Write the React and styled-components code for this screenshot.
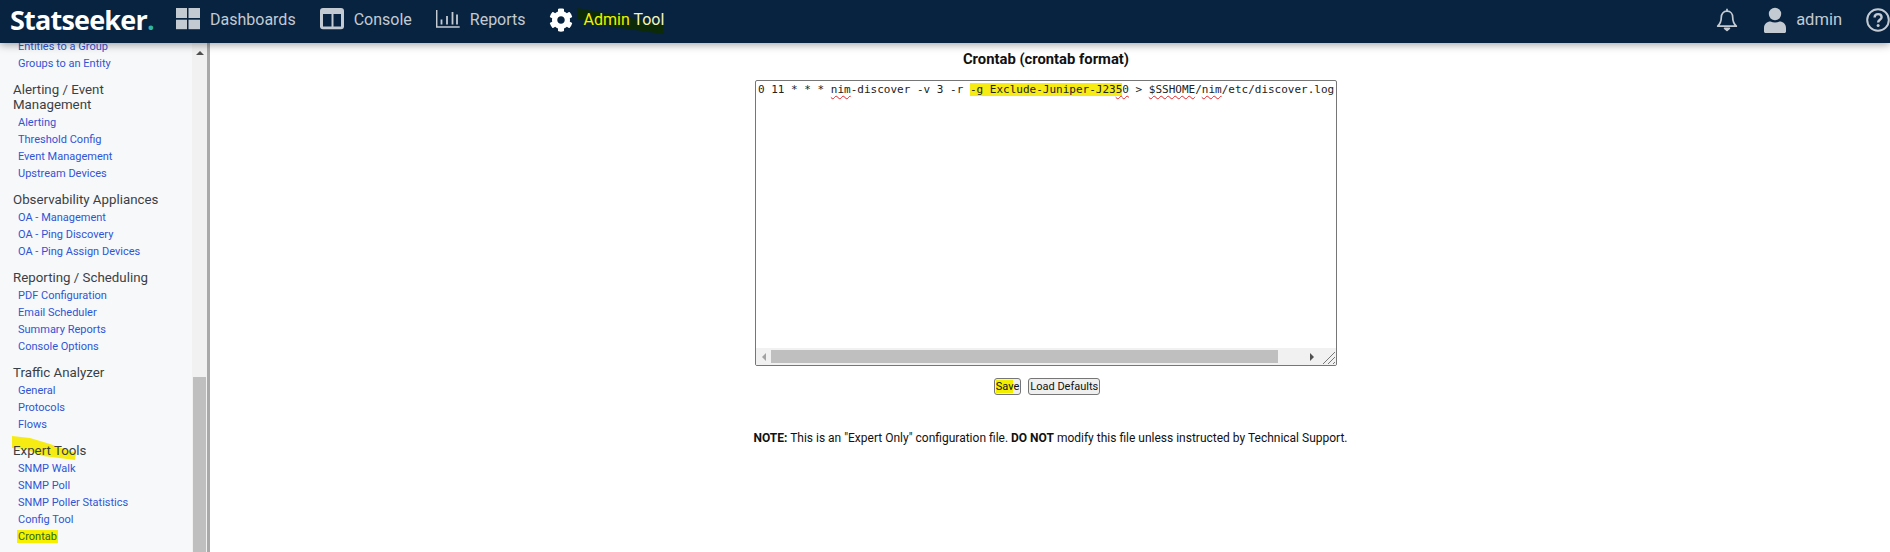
import React from "react";
import styled, { createGlobalStyle } from "styled-components";

const Global = createGlobalStyle`
  html, body { margin: 0; padding: 0; height: 100%; background: #fff; overflow: hidden; }
  #root { height: 552px; }
  * { box-sizing: border-box; }
`;

const Page = styled.div`
  width: 1890px;
  height: 552px;
  display: flex;
  flex-direction: column;
  font-family: Roboto, "Liberation Sans", sans-serif;
  overflow: hidden;
`;

const TopBar = styled.header`
  height: 43px;
  flex: none;
  background: #082340;
  display: flex;
  align-items: center;
  padding: 0 0 4px 10px;
  box-shadow: 0 2px 8px rgba(0, 0, 0, 0.35);
  position: relative;
  z-index: 2;
`;

const Logo = styled.div`
  font-family: "Open Sans", sans-serif;
  font-weight: 700;
  font-size: 27px;
  letter-spacing: -0.8px;
  color: #fff;
  width: 166px;
  flex: none;
  line-height: 39px;
  span { color: #2fb5a5; }
`;

const NavItem = styled.div`
  display: flex;
  align-items: center;
  gap: ${(p) => p.$gap ?? 10}px;
  margin-right: ${(p) => p.$mr ?? 0}px;
  font-size: ${(p) => p.$size ?? 16}px;
  color: #c3cad2;
  flex: none;
`;

const MarkedLabel = styled.span`
  position: relative;
  color: #f2f200;
  font-size: 16px;
  margin-left: 1px;
`;

const LabelText = styled.span`
  position: relative;
`;

const PaleText = styled.span`
  color: #f4f6b8;
`;

const MarkStroke = styled.svg`
  position: absolute;
  left: -7px;
  top: -2px;
  overflow: visible;
`;

const Spacer = styled.div`
  flex: 1;
`;

const Body = styled.div`
  flex: 1;
  display: flex;
  min-height: 0;
`;

const Sidebar = styled.aside`
  width: 210px;
  flex: none;
  display: flex;
  border-right: 3px solid #a9a9a9;
  background: #f7f8fa;
`;

const SideList = styled.nav`
  flex: 1;
  min-width: 0;
  overflow: hidden;
  padding: 0 12px 0 13px;
`;

const SideInner = styled.div`
  margin-top: -5px;
`;

const Group = styled.section`
  margin-bottom: 10px;
`;

const GroupTitle = styled.h4`
  margin: 0 0 2px;
  font-size: 13.3px;
  line-height: 15px;
  font-weight: 400;
  color: #3a3f45;
  position: relative;
`;

const SideLink = styled.a`
  display: block;
  font-size: 11px;
  line-height: 17px;
  padding-left: 5px;
  color: #2f55d4;
  white-space: nowrap;
`;

const LinkMark = styled.span`
  background: #f6f000;
  color: #2b6a10;
  padding: 0 1px;
  margin-left: -1px;
`;

const ExpertMark = styled.svg`
  position: absolute;
  left: -2px;
  top: -8px;
`;

const PageScroll = styled.div`
  width: 15px;
  flex: none;
  background: #f1f1f1;
  display: flex;
  flex-direction: column;
  align-items: center;
  padding-top: 8px;
`;

const ScrollUp = styled.div`
  width: 0;
  height: 0;
  border-left: 4px solid transparent;
  border-right: 4px solid transparent;
  border-bottom: 4px solid #505050;
`;

const ScrollThumb = styled.div`
  width: 13px;
  height: 176px;
  margin-top: 322px;
  background: #bfbfbf;
  flex: none;
`;

const Main = styled.main`
  flex: 1;
  min-width: 0;
  display: flex;
  flex-direction: column;
  align-items: center;
  padding-right: 8px;
`;

const Title = styled.h3`
  margin: 8px 0 0;
  font-size: 14.8px;
  line-height: 16px;
  font-weight: 700;
  color: #111;
  text-align: center;
`;

const CodeBox = styled.div`
  margin-top: 13px;
  width: 582px;
  height: 286px;
  border: 1px solid #767676;
  border-radius: 2px;
  display: flex;
  flex-direction: column;
  overflow: hidden;
  background: #fff;
`;

const CodeText = styled.pre`
  flex: 1;
  margin: 0;
  padding: 2px 2px;
  font-family: "DejaVu Sans Mono", monospace;
  font-size: 11px;
  line-height: 14px;
  color: #222;
  white-space: pre;
  overflow: hidden;
`;

const Spell = styled.span`
  text-decoration: underline wavy #e0272b;
  text-decoration-thickness: 1px;
  text-underline-offset: 2px;
  text-decoration-skip-ink: none;
`;

const Hi = styled.span`
  background: #f6ec14;
`;

const HScroll = styled.div`
  height: 17px;
  flex: none;
  background: #f1f1f1;
  display: flex;
  align-items: center;
`;

const ArrowCell = styled.div`
  width: 15px;
  flex: none;
  display: flex;
  justify-content: center;
`;

const Arrow = styled.div`
  width: 0;
  height: 0;
  border-top: 4px solid transparent;
  border-bottom: 4px solid transparent;
  ${(p) => (p.$left ? "border-right: 4px solid #a3a3a3;" : "border-left: 4px solid #505050;")}
`;

const HThumb = styled.div`
  width: 507px;
  height: 13px;
  background: #bfbfbf;
  flex: none;
`;

const HTrack = styled.div`
  flex: 1;
`;

const Grip = styled.svg`
  flex: none;
  display: block;
`;

const Buttons = styled.div`
  margin: 12px 0 0 2px;
  display: flex;
  gap: 7px;
`;

const Btn = styled.button`
  height: 17px;
  padding: 0 1px;
  min-width: 23px;
  font-family: Roboto, sans-serif;
  font-size: 11px;
  line-height: 14px;
  color: #111;
  background: #efefef;
  border: 1px solid #767676;
  border-radius: 3px;
`;

const BtnMark = styled.span`
  background: #f2ee00;
`;

const Note = styled.p`
  margin: 36px 0 0 9px;
  font-size: 12px;
  line-height: 14px;
  color: #111;
  white-space: nowrap;
`;

const DashIcon = () => (
  <svg width="24" height="23" viewBox="0 0 24 23" fill="#c3cad2">
    <rect x="0" y="0" width="11" height="10" />
    <rect x="12.500" y="0" width="11.500" height="10" />
    <rect x="0" y="11.700" width="11" height="9.500" />
    <rect x="12.500" y="11.700" width="11.500" height="9.500" />
  </svg>
);
const ConsoleIcon = () => (
  <svg width="24" height="23" viewBox="0 0 24 23">
    <rect x="0" y="0" width="24" height="21.200" rx="3" fill="#c3cad2" />
    <rect x="3" y="6" width="8.500" height="12.500" fill="#082340" />
    <rect x="13.500" y="6" width="7.500" height="12.500" fill="#082340" />
  </svg>
);
const ReportsIcon = () => (
  <svg width="24" height="23" viewBox="0 0 24 23" fill="none" stroke="#c3cad2">
    <path d="M.7 2v17h23" strokeWidth="1.500" />
    <path d="M5.500 11.500v5M11 8v8.500M16.500 4v12.500M21 6.500v10" strokeWidth="1.800" />
  </svg>
);
const GearIcon = () => (
  <svg width="24" height="24" viewBox="0 0 512 512" fill="#fff">
    <path d="M487.400 315.700l-42.600-24.600c4.300-23.200 4.300-47 0-70.200l42.600-24.600c4.900-2.800 7.100-8.600 5.500-14-11.100-35.600-30-67.800-54.700-94.600-3.800-4.100-10-5.100-14.800-2.300L380.800 110c-17.900-15.400-38.500-27.300-60.800-35.100V25.800c0-5.600-3.900-10.500-9.400-11.700-36.700-8.200-74.300-7.800-109.200 0-5.500 1.200-9.400 6.100-9.400 11.700V75c-22.200 7.900-42.800 19.800-60.800 35.100L88.700 85.500c-4.900-2.800-11-1.900-14.800 2.300-24.700 26.700-43.600 58.900-54.700 94.600-1.700 5.400.6 11.200 5.500 14L67.300 221c-4.300 23.200-4.300 47 0 70.200l-42.600 24.600c-4.900 2.800-7.100 8.600-5.500 14 11.100 35.600 30 67.800 54.700 94.600 3.800 4.100 10 5.100 14.800 2.300l42.600-24.600c17.900 15.400 38.500 27.300 60.800 35.100v49.200c0 5.600 3.900 10.500 9.400 11.700 36.700 8.200 74.300 7.800 109.200 0 5.500-1.200 9.400-6.100 9.400-11.700v-49.200c22.200-7.900 42.800-19.800 60.800-35.100l42.600 24.600c4.900 2.800 11 1.900 14.800-2.300 24.700-26.700 43.600-58.900 54.700-94.600 1.500-5.500-.7-11.300-5.600-14.100zM256 336c-44.100 0-80-35.900-80-80s35.900-80 80-80 80 35.900 80 80-35.900 80-80 80z" />
  </svg>
);
const BellIcon = () => (
  <svg width="22" height="24" viewBox="0 0 22 24" fill="none" stroke="#c3cad2" strokeWidth="1.700" strokeLinejoin="round">
    <path d="M11 3.200c-3.600 0-5.700 2.700-5.700 6 0 4.600-1 6.400-3.600 9h18.600c-2.600-2.600-3.600-4.400-3.600-9 0-3.300-2.100-6-5.700-6z" />
    <path d="M11 .8v2.200" />
    <path d="M8.600 20.400h4.800l-2.400 2z" fill="#c3cad2" />
  </svg>
);
const UserIcon = () => (
  <svg width="24" height="26" viewBox="0 0 24 26" fill="#c3cad2">
    <circle cx="12" cy="7" r="6.200" />
    <path d="M1 24.500v-3.500c0-4.200 3-6.600 6.500-6.600 1.400.7 2.900 1 4.500 1s3.100-.3 4.500-1c3.500 0 6.500 2.400 6.500 6.600v3.500c0 .8-.7 1.500-1.500 1.500h-19c-.8 0-1.500-.7-1.500-1.500z" />
  </svg>
);
const HelpIcon = () => (
  <svg width="24" height="24" viewBox="0 0 24 24" fill="none" stroke="#c3cad2" strokeWidth="2">
    <circle cx="12" cy="12" r="10.800" />
    <path d="M8.600 9.400c0-2 1.500-3.300 3.500-3.300s3.500 1.200 3.500 3.100c0 2.600-3.500 2.600-3.500 5.200" strokeWidth="2.400" />
    <circle cx="12.100" cy="17.600" r="1.500" fill="#c3cad2" stroke="none" />
  </svg>
);

const groups = [
  { title: null, links: ["Entities to a Group", "Groups to an Entity"] },
  { title: "Alerting / Event Management", links: ["Alerting", "Threshold Config", "Event Management", "Upstream Devices"] },
  { title: "Observability Appliances", links: ["OA - Management", "OA - Ping Discovery", "OA - Ping Assign Devices"] },
  { title: "Reporting / Scheduling", links: ["PDF Configuration", "Email Scheduler", "Summary Reports", "Console Options"] },
  { title: "Traffic Analyzer", links: ["General", "Protocols", "Flows"] },
  { title: "Expert Tools", mark: true, links: ["SNMP Walk", "SNMP Poll", "SNMP Poller Statistics", "Config Tool", "Crontab"] },
];

export default function App() {
  return (
    <Page>
      <Global />
      <TopBar>
        <Logo>Statseeker<span>.</span></Logo>
        <NavItem $mr={24}><DashIcon /><span>Dashboards</span></NavItem>
        <NavItem $mr={24}><ConsoleIcon /><span>Console</span></NavItem>
        <NavItem $mr={23}><ReportsIcon /><span>Reports</span></NavItem>
        <NavItem>
          <GearIcon />
          <MarkedLabel>
            <MarkStroke width="90" height="30" viewBox="0 0 90 30">
              <path d="M0 0 L86 16 L86 26 L37 19 L1 11 Z" fill="#0c2a08" />
            </MarkStroke>
            <LabelText>Admin <PaleText>Tool</PaleText></LabelText>
          </MarkedLabel>
        </NavItem>
        <Spacer />
        <NavItem $mr={25}><BellIcon /></NavItem>
        <NavItem $mr={24} $gap={9} $size={16.5}><UserIcon /><span>admin</span></NavItem>
        <NavItem><HelpIcon /></NavItem>
      </TopBar>
      <Body>
        <Sidebar>
          <SideList>
            <SideInner>
              {groups.map((g, i) => (
                <Group key={i}>
                  {g.title && (
                    <GroupTitle>
                      {g.mark && (
                        <ExpertMark width="66" height="26" viewBox="0 0 66 26">
                          <path d="M1 1 L19 3 L39 9 L65 18 L64 25 L32 21 L14 14 L1 13 Z" fill="#f6ec14" />
                        </ExpertMark>
                      )}
                      <LabelText>{g.title}</LabelText>
                    </GroupTitle>
                  )}
                  {g.links.map((l) => (
                    <SideLink key={l}>{l === "Crontab" ? <LinkMark>{l}</LinkMark> : l}</SideLink>
                  ))}
                </Group>
              ))}
            </SideInner>
          </SideList>
          <PageScroll>
            <ScrollUp />
            <ScrollThumb />
          </PageScroll>
        </Sidebar>
        <Main>
          <Title>Crontab (crontab format)</Title>
          <CodeBox>
            <CodeText>
              0 11 * * * <Spell>nim</Spell>-discover -v 3 -r <Hi>-g Exclude-Juniper-J23</Hi><Spell><Hi>5</Hi>0</Spell> &gt; <Spell>$SSHOME</Spell>/<Spell>nim</Spell>/etc/discover.log
            </CodeText>
            <HScroll>
              <ArrowCell><Arrow $left /></ArrowCell>
              <HThumb />
              <HTrack />
              <ArrowCell><Arrow /></ArrowCell>
              <Grip width="17" height="17" viewBox="0 0 17 17" stroke="#777" strokeWidth="1">
                <path d="M4 16 L16 4 M9 16 L16 9 M14 16 L16 14" />
              </Grip>
            </HScroll>
          </CodeBox>
          <Buttons>
            <Btn><BtnMark>Sav</BtnMark>e</Btn>
            <Btn>Load Defaults</Btn>
          </Buttons>
          <Note><b>NOTE:</b> This is an "Expert Only" configuration file. <b>DO NOT</b> modify this file unless instructed by Technical Support.</Note>
        </Main>
      </Body>
    </Page>
  );
}
